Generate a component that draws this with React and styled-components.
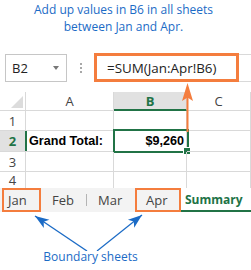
import React from "react";
import styled, { createGlobalStyle } from "styled-components";

const GlobalStyle = createGlobalStyle`
  body {
    margin: 0;
    background: #ffffff;
  }
  * {
    box-sizing: border-box;
  }
`;

const blue = "#1b6bc6";
const orange = "#f47d3e";
const green = "#217346";
const gridLine = "#d9d9d9";

const Page = styled.div`
  position: relative;
  width: 251px;
  height: 270px;
  overflow: hidden;
  font-family: "Open Sans", "Liberation Sans", sans-serif;
`;

const Caption = styled.div`
  width: 247px;
  padding-top: 1px;
  text-align: center;
  font-size: 12px;
  line-height: 17px;
  color: ${blue};
`;

const FormulaBar = styled.div`
  display: flex;
  align-items: stretch;
  height: 28px;
  margin-top: 19px;
`;

const NameBox = styled.div`
  display: flex;
  align-items: center;
  justify-content: space-between;
  width: 62px;
  margin-left: 5px;
  padding: 0 7px 0 6px;
  border: 1px solid #c6c6c6;
  font-size: 13px;
  color: #222;
`;

const Caret = styled.span`
  width: 0;
  height: 0;
  border-left: 3.5px solid transparent;
  border-right: 3.5px solid transparent;
  border-top: 4px solid #777;
`;

const Dots = styled.div`
  width: 27px;
  display: flex;
  flex-direction: column;
  align-items: center;
  justify-content: center;
  gap: 2px;

  span {
    width: 2px;
    height: 2px;
    background: #a8a8a8;
  }
`;

const FormulaArea = styled.div`
  flex: 1;
  border-top: 1px solid ${gridLine};
  border-bottom: 1px solid ${gridLine};
`;

const FormulaBox = styled.div`
  width: 145px;
  height: 29px;
  margin-top: -2px;
  padding-left: 10px;
  display: flex;
  align-items: center;
  border: 3px solid ${orange};
  font-size: 13.4px;
  color: #222;
`;

const Sheet = styled.div`
  display: grid;
  grid-template-columns: 26px 88px 73px 64px 1fr;
  grid-template-rows: 19px 20px 21px 20px 16px;
  margin-top: 10px;
`;

const Corner = styled.div`
  position: relative;
  border-right: 1px solid ${gridLine};
  border-bottom: 1px solid ${gridLine};

  &::after {
    content: "";
    position: absolute;
    right: 2px;
    bottom: 2px;
    width: 0;
    height: 0;
    border-left: 12px solid transparent;
    border-bottom: 12px solid #dcdcdc;
  }
`;

const ColHead = styled.div`
  display: flex;
  align-items: center;
  justify-content: center;
  border-right: 1px solid ${(p) => (p.$last ? "transparent" : gridLine)};
  border-bottom: ${(p) => (p.$active ? `2px solid ${green}` : `1px solid ${gridLine}`)};
  background: ${(p) => (p.$active ? "#e1e1e1" : "#ffffff")};
  color: ${(p) => (p.$active ? green : "#444")};
  font-weight: ${(p) => (p.$active ? 700 : 400)};
  font-size: 13px;
`;

const RowHead = styled.div`
  position: relative;
  display: flex;
  align-items: center;
  justify-content: center;
  border-right: 1px solid ${gridLine};
  border-bottom: ${(p) => (p.$end ? "none" : `1px solid ${gridLine}`)};
  background: ${(p) => (p.$active ? "#e1e1e1" : "#ffffff")};
  color: ${(p) => (p.$active ? green : "#444")};
  font-weight: ${(p) => (p.$active ? 700 : 400)};
  font-size: 13px;

  ${(p) =>
    p.$active &&
    `
    &::after {
      content: "";
      position: absolute;
      top: 0;
      bottom: 0;
      right: -2px;
      width: 2px;
      background: ${green};
    }
  `}
`;

const Cell = styled.div`
  position: relative;
  display: flex;
  align-items: center;
  justify-content: ${(p) => (p.$right ? "flex-end" : "flex-start")};
  padding: 0 3px;
  border-right: 1px solid ${(p) => (p.$open ? "transparent" : gridLine)};
  border-bottom: ${(p) => (p.$end ? "none" : `1px solid ${gridLine}`)};
  font-family: "Liberation Sans", Arial, sans-serif;
  font-size: 12.6px;
  font-weight: 700;
  color: #000;
`;

const Selected = styled(Cell)`
  padding-right: 2px;

  &::before {
    content: "";
    position: absolute;
    left: -1px;
    right: -3px;
    top: -2px;
    bottom: -2px;
    border: 2px solid ${green};
  }

  &::after {
    content: "";
    position: absolute;
    right: -5px;
    bottom: -4px;
    width: 6px;
    height: 6px;
    background: ${green};
    border: 1px solid #ffffff;
  }
`;

const TabBar = styled.div`
  display: flex;
  height: 24px;
`;

const Tabs = styled.div`
  display: flex;
  background: #f3f3f3;
  padding-left: 2px;
`;

const Tab = styled.div`
  position: relative;
  display: flex;
  align-items: center;
  width: ${(p) => p.$w}px;
  padding-left: ${(p) => p.$pad}px;
  border: 2px solid ${(p) => (p.$boundary ? orange : "transparent")};
  border-left-width: ${(p) => (p.$boundary ? 2 : 0)}px;
  border-right-width: ${(p) => (p.$boundary ? 2 : 0)}px;
  font-size: 13px;
  color: #444;

  ${(p) =>
    p.$divider &&
    `
    &::after {
      content: "";
      position: absolute;
      right: 0;
      top: 4px;
      bottom: 4px;
      width: 1px;
      background: #b4b4b4;
    }
  `}
`;

const ActiveTab = styled.div`
  flex: 1;
  display: flex;
  align-items: center;
  padding-left: 4px;
  border-bottom: 2px solid ${green};
  font-size: 12px;
  font-weight: 700;
  color: ${green};
`;

const Notes = styled.div`
  display: flex;
  flex-direction: column;
  align-items: flex-start;
`;

const NoteLabel = styled.div`
  width: 181px;
  margin-top: -2px;
  text-align: center;
  font-size: 12px;
  line-height: 16px;
  color: ${blue};
`;

const PointerUp = styled.svg`
  position: absolute;
  left: 180px;
  top: 82px;
`;

const Arrow = ({ x1, y1, x2, y2 }) => {
  const angle = (Math.atan2(y2 - y1, x2 - x1) * 180) / Math.PI;
  return (
    <g>
      <line x1={x1} y1={y1} x2={x2} y2={y2} stroke={blue} strokeWidth="1.3" />
      <path
        d="M0 0 L-14 -5 L-10.5 0 L-14 5 Z"
        fill={blue}
        transform={`translate(${x2} ${y2}) rotate(${angle})`}
      />
    </g>
  );
};

export default function App() {
  return (
    <Page>
      <GlobalStyle />
      <Caption>
        Add up values in B6 in all sheets
        <br />
        between Jan and Apr.
      </Caption>

      <FormulaBar>
        <NameBox>
          B2
          <Caret />
        </NameBox>
        <Dots>
          <span />
          <span />
          <span />
        </Dots>
        <FormulaArea>
          <FormulaBox>=SUM(Jan:Apr!B6)</FormulaBox>
        </FormulaArea>
      </FormulaBar>

      <Sheet>
        <Corner />
        <ColHead>A</ColHead>
        <ColHead $active>B</ColHead>
        <ColHead>C</ColHead>
        <ColHead $last />

        <RowHead>1</RowHead>
        <Cell />
        <Cell />
        <Cell />
        <Cell $open />

        <RowHead $active>2</RowHead>
        <Cell>Grand Total:</Cell>
        <Selected $right>$9,260</Selected>
        <Cell />
        <Cell $open />

        <RowHead>3</RowHead>
        <Cell />
        <Cell />
        <Cell />
        <Cell $open />

        <RowHead $end>4</RowHead>
        <Cell $end />
        <Cell $end />
        <Cell $end />
        <Cell $end $open />
      </Sheet>

      <TabBar>
        <Tabs>
          <Tab $w={39} $pad={4} $boundary>Jan</Tab>
          <Tab $w={46} $pad={11} $divider>Feb</Tab>
          <Tab $w={48} $pad={11}>Mar</Tab>
          <Tab $w={46} $pad={9} $boundary>Apr</Tab>
        </Tabs>
        <ActiveTab>Summary</ActiveTab>
      </TabBar>

      <Notes>
        <svg width="251" height="39" viewBox="0 0 251 39">
          <Arrow x1={87} y1={39} x2={35} y2={4} />
          <Arrow x1={97} y1={39} x2={142} y2={3} />
        </svg>
        <NoteLabel>Boundary sheets</NoteLabel>
      </Notes>

      <PointerUp width="16" height="50" viewBox="0 0 16 50">
        <line x1="7.5" y1="12" x2="7.5" y2="50" stroke={orange} strokeWidth="2" />
        <path d="M7.5 1 L13 19 L7.5 15.5 L2 19 Z" fill={orange} />
      </PointerUp>
    </Page>
  );
}
